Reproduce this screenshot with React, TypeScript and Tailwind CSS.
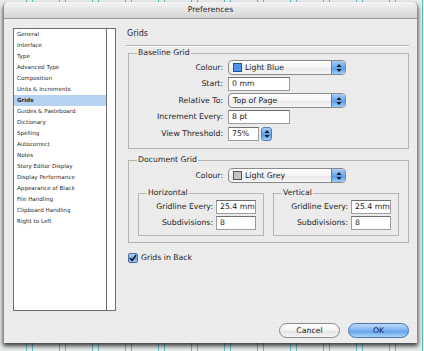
import React from "react";

const items = [
  "General",
  "Interface",
  "Type",
  "Advanced Type",
  "Composition",
  "Units & Increments",
  "Grids",
  "Guides & Pasteboard",
  "Dictionary",
  "Spelling",
  "Autocorrect",
  "Notes",
  "Story Editor Display",
  "Display Performance",
  "Appearance of Black",
  "File Handling",
  "Clipboard Handling",
  "Right to Left",
];

// little up/down arrows for the aqua popups
const Arrows = () => (
  <svg width="6" height="10" viewBox="0 0 6 10">
    <path d="M3 1 L5.5 4 H0.5 Z M3 9 L5.5 6 H0.5 Z" fill="#1b1b1b" />
  </svg>
);

const Popup = ({ text, swatch }: { text: string; swatch?: string }) => (
  <div className="flex h-[15px] w-[118px] items-stretch overflow-hidden rounded-[4px] border border-[#8a8a8a] bg-[linear-gradient(#ffffff,#f4f4f4_50%,#e8e8e8_51%,#f6f6f6)]">
    <div className="flex flex-1 items-center gap-[3px] pl-[4px]">
      {swatch && <span className={swatch} />}
      <span>{text}</span>
    </div>
    <div className="flex w-[14px] items-center justify-center border-l border-[#5b7fb5] bg-[linear-gradient(#a9cdf6,#6aa6ec_50%,#4e93e6_51%,#9cd0fa)]">
      <Arrows />
    </div>
  </div>
);

const Field = ({ text, w }: { text: string; w: string }) => (
  <div
    className={`flex h-[14px] items-center border border-[#9c9c9c] border-t-[#6f6f6f] bg-white pl-[3px] ${w}`}
  >
    {text}
  </div>
);

const Row = ({ label, children }: { label: string; children: React.ReactNode }) => (
  <>
    <div className="text-right">{label}</div>
    <div className="flex items-center">{children}</div>
  </>
);

const App = () => {
  return (
    <div className="relative h-[351px] w-[424px] overflow-hidden bg-[#e7eaea] bg-[repeating-linear-gradient(90deg,transparent_0_26px,#5fb9ba_26px_27px,transparent_27px_32px,#5fb9ba_32px_33px)] pt-[2px] pl-[3px] font-['DejaVu_Sans',sans-serif] text-[7.75px] text-[#1e1e1e]">
      <div className="flex h-[341px] w-[415px] flex-col overflow-hidden rounded-t-[5px] border-l border-r border-[#8d8d8d] bg-[#ececec] bg-[repeating-linear-gradient(#eeeeee_0_1px,#e9e9e9_1px_2px)] shadow-[0_3px_4px_rgba(0,0,0,0.75)]">
        {/* title bar */}
        <div className="flex h-[17px] shrink-0 items-center justify-center border-b border-[#9a9a9a] bg-[linear-gradient(#f4f4f4,#e2e2e2_60%,#d4d4d4)]">
          Preferences
        </div>

        <div className="flex flex-1 pt-[9px] pl-[9px]">
          {/* sidebar list */}
          <div className="flex h-[283px] w-[103px] shrink-0 border border-[#6e6e6e] bg-white">
            <div className="flex-1 text-[5.6px] text-[#2a2a2a]">
              {items.map((it) =>
                it === "Grids" ? (
                  <div key={it} className="h-[11px] bg-[#b7d3f4] pl-[3px] leading-[11px] font-bold">
                    {it}
                  </div>
                ) : (
                  <div key={it} className="h-[11px] pl-[3px] leading-[11px]">
                    {it}
                  </div>
                )
              )}
            </div>
            <div className="w-[9px] border-l border-[#6e6e6e] bg-white" />
          </div>

          {/* right panel */}
          <div className="ml-[10px] flex w-[283px] flex-col">
            <div className="h-[11px] pl-[1px] text-[8px] leading-[11px]">Grids</div>
            <div className="mt-[6px] h-[2px] border-t border-b border-t-[#b3b3b3] border-b-white" />

            <fieldset className="mt-[1px] ml-[2px] border border-[#b4b4b4] px-0 pt-[1.5px] pb-[6px]">
              <legend className="ml-[8px] px-[1px] leading-[10px]">Baseline Grid</legend>
              <div className="grid auto-rows-[16.5px] grid-cols-[94px_auto] items-center gap-x-[5px]">
                <Row label="Colour:">
                  <Popup
                    text="Light Blue"
                    swatch="h-[9px] w-[9px] border border-[#23508f] bg-[#4d93e8]"
                  />
                </Row>
                <Row label="Start:">
                  <Field text="0 mm" w="w-[62px]" />
                </Row>
                <Row label="Relative To:">
                  <Popup text="Top of Page" />
                </Row>
                <Row label="Increment Every:">
                  <Field text="8 pt" w="w-[62px]" />
                </Row>
                <Row label="View Threshold:">
                  <Field text="75%" w="w-[31px]" />
                  <div className="ml-[2px] flex h-[14px] w-[11px] items-center justify-center rounded-[3px] border border-[#5b7fb5] bg-[linear-gradient(#a9cdf6,#6aa6ec_50%,#4e93e6_51%,#9cd0fa)]">
                    <Arrows />
                  </div>
                </Row>
              </div>
            </fieldset>

            <fieldset className="mt-[6px] ml-[2px] border border-[#b4b4b4] pt-[2.5px] pb-[6px]">
              <legend className="ml-[8px] px-[1px] leading-[10px]">Document Grid</legend>
              <div className="grid auto-rows-[16.5px] grid-cols-[94px_auto] items-center gap-x-[5px]">
                <Row label="Colour:">
                  <Popup
                    text="Light Grey"
                    swatch="h-[9px] w-[9px] border border-[#555555] bg-[#c4c4c4]"
                  />
                </Row>
              </div>
              <div className="mt-[4px] flex gap-[9px] px-[9px]">
                {["Horizontal", "Vertical"].map((h) => (
                  <fieldset key={h} className="flex-1 border border-[#b4b4b4] pt-[1px] pb-[4px]">
                    <legend className="ml-[8px] px-[1px] leading-[10px]">{h}</legend>
                    <div className="grid auto-rows-[16px] grid-cols-[74px_auto] items-center gap-x-[3px]">
                      <Row label="Gridline Every:">
                        <Field text="25.4 mm" w="w-[40px]" />
                      </Row>
                      <Row label="Subdivisions:">
                        <Field text="8" w="w-[40px]" />
                      </Row>
                    </div>
                  </fieldset>
                ))}
              </div>
            </fieldset>

            <div className="mt-[9px] ml-[2px] flex h-[11px] items-center gap-[3px]">
              <div className="flex h-[10px] w-[10px] items-center justify-center rounded-[2px] border border-[#4a6c9e] bg-[linear-gradient(#b6d6f8,#6fa9ec_50%,#5597e6_51%,#a5d2fa)]">
                <svg width="8" height="8" viewBox="0 0 8 8">
                  <path d="M1.2 4.2 L3.2 6.6 L7 0.8" stroke="#111" strokeWidth="1.5" fill="none" />
                </svg>
              </div>
              <span>Grids in Back</span>
            </div>

            <div className="mt-auto flex justify-end gap-[8px] pb-[5px]">
              <button className="h-[15px] w-[61px] rounded-full border border-[#8a8a8a] bg-[linear-gradient(#ffffff,#f2f2f2_50%,#e2e2e2_51%,#f6f6f6)] text-[7.75px] leading-[13px]">
                Cancel
              </button>
              <button className="h-[15px] w-[61px] rounded-full border border-[#4d72a8] bg-[linear-gradient(#bcdaf9,#79b1ef_50%,#5a9de9_51%,#a9d6fb)] text-[7.75px] leading-[13px]">
                OK
              </button>
            </div>
          </div>
        </div>
      </div>
    </div>
  );
};

export default App;
